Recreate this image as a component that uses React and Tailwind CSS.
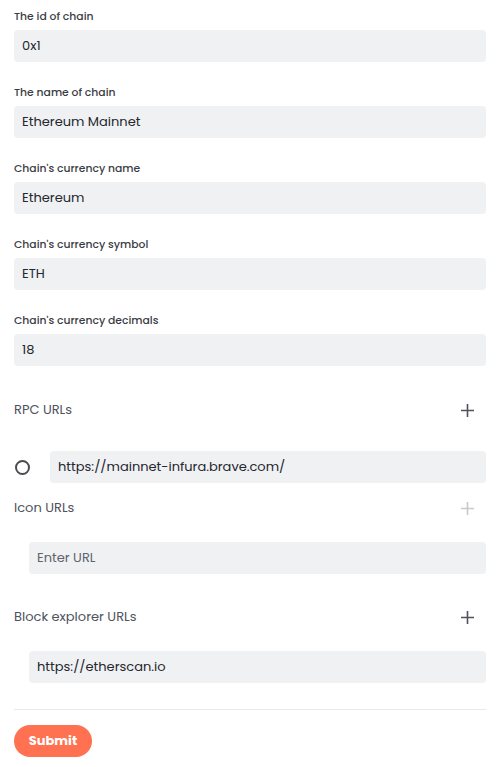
import React from "react";

const fields = [
  { label: "The id of chain", value: "0x1" },
  { label: "The name of chain", value: "Ethereum Mainnet" },
  { label: "Chain's currency name", value: "Ethereum" },
  { label: "Chain's currency symbol", value: "ETH" },
  { label: "Chain's currency decimals", value: "18" },
];

function Plus({ disabled }) {
  return (
    <button
      className={
        "w-[32px] h-[32px] flex items-center justify-center mr-[3px] " +
        (disabled ? "text-[#c8c9cc]" : "text-[#4f5258]")
      }
    >
      <svg width="13" height="13" viewBox="0 0 13 13" fill="none">
        <path d="M6.5 0v13M0 6.5h13" stroke="currentColor" strokeWidth="1.6" />
      </svg>
    </button>
  );
}

function Header({ title, disabled }) {
  return (
    <div className="h-[32px] flex items-center justify-between">
      <span className="text-[13px] text-[#4e535c]">{title}</span>
      <Plus disabled={disabled} />
    </div>
  );
}

function Input({ value, placeholder, className = "" }) {
  return (
    <input
      readOnly
      value={value}
      placeholder={placeholder}
      className={
        "block h-[32px] bg-[#f0f1f3] rounded-[4px] px-[8px] text-[13px] text-[#24272e] placeholder:text-[#5f636b] outline-none " +
        className
      }
    />
  );
}

export default function App() {
  return (
    <div className="w-full min-h-screen bg-white font-['Poppins','Noto_Sans',sans-serif] pl-[14px] pr-[16px] pt-[9px]">
      {fields.map((f) => (
        <div key={f.label} className="mb-[23px]">
          <div className="text-[10.8px] leading-[16px] font-medium text-[#3a3d44] mb-[5px]">
            {f.label}
          </div>
          <Input value={f.value} className="w-full" />
        </div>
      ))}

      <div className="mt-[28px]">
        <Header title="RPC URLs" />
      </div>
      <div className="flex items-center mt-[25px]">
        <div className="w-[36px] flex items-center">
          <span className="ml-[1px] w-[15px] h-[15px] rounded-full border-2 border-[#4a4c50]" />
        </div>
        <Input value="https://mainnet-infura.brave.com/" className="flex-1" />
      </div>

      <div className="mt-[9px]">
        <Header title="Icon URLs" disabled />
      </div>
      <div className="mt-[18px] pl-[15px]">
        <Input value="" placeholder="Enter URL" className="w-full" />
      </div>

      <div className="mt-[27px]">
        <Header title="Block explorer URLs" />
      </div>
      <div className="mt-[18px] pl-[15px]">
        <Input value="https://etherscan.io" className="w-full" />
      </div>

      <div className="mt-[26px] border-t border-[#e8e9eb]" />

      <button className="mt-[15px] h-[32px] w-[78px] rounded-full bg-[#ff7150] text-white text-[13px] font-bold">
        Submit
      </button>
    </div>
  );
}
